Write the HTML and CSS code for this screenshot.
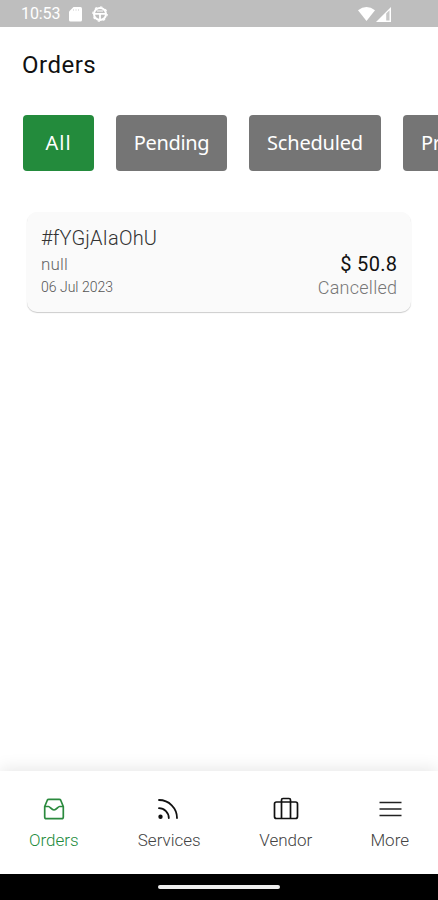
FILE: index.html
```html
<!DOCTYPE html>
<html lang="en">
<head>
<meta charset="utf-8">
<title>Orders</title>
<link rel="stylesheet" href="styles.css">
</head>
<body>
<div class="screen">
  <header class="status">
    <span class="clock">10:53</span>
    <svg class="sd" width="13" height="15" viewBox="0 0 13 15"><path d="M4.500 0H11.500Q13 0 13 1.500V13Q13 14.500 11.500 14.500H1.500Q0 14.500 0 13V4.500Z" fill="#fff"/><path d="M4.500 2v2M7 2v2M9.500 2v2" stroke="#e4e4e4"/></svg>
    <svg class="wheel" width="16" height="16" viewBox="0 0 16 16" fill="none" stroke="#fff"><circle cx="8" cy="8" r="6" stroke-width="2"/><circle cx="8" cy="8" r="7.200" stroke-width="1.200" stroke-dasharray="2.200 3.450"/><path d="M2.500 7.800h11M8 8v5.500" stroke-width="1.800"/><path d="M5 5h6" stroke-width="1"/></svg>
    <svg class="wifi" width="17" height="14" viewBox="0 0 17 14"><path d="M0 3.300Q8.500-3.300 17 3.300L8.500 14Z" fill="#fff"/></svg>
    <svg class="signal" width="15" height="15" viewBox="0 0 15 15"><path d="M0 15L15 0V15Z" fill="#fff"/><path d="M10.200 6.500L13.500 3.200V13.500H10.200Z" fill="#c8c8c8"/></svg>
  </header>
  <h1 class="title">Orders</h1>
  <nav class="filters">
    <button class="pill active">All</button>
    <button class="pill pending">Pending</button>
    <button class="pill scheduled">Scheduled</button>
    <button class="pill preparing">Preparing</button>
  </nav>
  <main class="list">
    <article class="card">
      <div class="info">
        <div class="code">#fYGjAIaOhU</div>
        <div class="desc">null</div>
        <div class="date">06 Jul 2023</div>
      </div>
      <div class="result">
        <div class="price">$ 50.8</div>
        <div class="state">Cancelled</div>
      </div>
    </article>
  </main>
  <footer class="tabs">
    <a class="tab orders"><svg width="26" height="24" viewBox="0 0 26 24" fill="none" stroke="#2b8a3e" stroke-width="1.700" stroke-linejoin="round"><path d="M3.700 9.500L6.300 3.200Q6.700 2.300 7.800 2.300H18.200Q19.300 2.300 19.700 3.200L22.300 9.500V20Q22.300 21.700 20.600 21.700H5.400Q3.700 21.700 3.700 20ZM3.700 9.500H7.500C9 9.500 10.500 13 13 13S17 9.500 18.500 9.500H22.300"/></svg><span>Orders</span></a>
    <a class="tab services"><svg width="26" height="24" viewBox="0 0 26 24" fill="none" stroke="#111" stroke-width="1.800" stroke-linecap="round"><circle cx="4.500" cy="19.700" r="1.300" fill="#111"/><path d="M3 11.200A9.800 9.800 0 0 1 12.800 21M3 3A18 18 0 0 1 21 21"/></svg><span>Services</span></a>
    <a class="tab vendor"><svg width="26" height="24" viewBox="0 0 26 24" fill="none" stroke="#111" stroke-width="1.700" stroke-linejoin="round"><rect x="1.500" y="5" width="23" height="16.500" rx="2"/><path d="M8.500 21V3Q8.500 1.500 10 1.500H16Q17.500 1.500 17.500 3V21"/></svg><span>Vendor</span></a>
    <a class="tab more"><svg width="26" height="24" viewBox="0 0 26 24" fill="none" stroke="#222" stroke-width="1.700"><path d="M2.500 5.500H24.500M2.500 12H24.500M2.500 18.500H24.500"/></svg><span>More</span></a>
  </footer>
  <div class="system"><i class="handle"></i></div>
</div>
</body>
</html>
```
FILE: styles.css
```css
* { box-sizing: border-box; }
body { margin: 0; background: #fff; font-family: Roboto, sans-serif; }
.screen { width: 438px; height: 900px; display: flex; flex-direction: column; overflow: hidden; }
.status { height: 27px; flex: none; background: #bebebe; display: flex; align-items: center; padding: 1px 47px 0 21px; }
.clock { color: #fff; font-size: 16px; line-height: 20px; width: 48px; letter-spacing: -.1px; }
.wheel { margin-left: 10px; }
.wifi { margin-left: auto; }
.signal { margin-left: 1px; }
.title { margin: 0; padding: 24px 22px 0; height: 88px; flex: none; font-size: 24px; line-height: 28px; font-weight: 400; letter-spacing: .5px; color: #111; }
.filters { display: flex; gap: 22px; padding-left: 23px; height: 56px; flex: none; }
.pill { flex: none; height: 56px; border: 0; border-radius: 4px; background: #757575; color: #fff; font: 400 20px/56px "Noto Sans", sans-serif; letter-spacing: -.35px; padding: 0; text-align: center; }
.active { width: 71px; background: #238b3c; letter-spacing: 1px; }
.pending { width: 111px; }
.scheduled { width: 132px; letter-spacing: -.2px; }
.preparing { width: 132px; padding-left: 18px; text-align: left; }
.list { flex: 1; padding: 41px 27px 0; }
.card { height: 100px; border-radius: 10px; background: #fafafa; box-shadow: 0 1px 1px #ccc; display: flex; justify-content: space-between; padding: 12px 14px 0; font-weight: 300; }
.code { font-size: 20px; line-height: 28px; color: #333; letter-spacing: .15px; }
.desc { font-size: 17px; line-height: 24px; color: #666; letter-spacing: .2px; }
.date { font-size: 14px; line-height: 23px; color: #555; }
.result { text-align: right; padding-top: 28px; }
.price { font-size: 20px; line-height: 24px; font-weight: 400; color: #111; letter-spacing: .3px; margin-right: -.3px; }
.state { font-size: 18px; line-height: 24px; color: #777; letter-spacing: .25px; margin-right: -.25px; }
.tabs { height: 103px; flex: none; display: flex; justify-content: space-between; padding: 26px 29px 0; background: #fff; box-shadow: 0 -2px 16px rgba(0,0,0,.1); font-weight: 300; font-size: 17px; }
.tab { display: flex; flex-direction: column; align-items: center; color: #444; line-height: 20px; gap: 9px; }
.tab.services, .tab.vendor { position: relative; left: .5px; }
.tab.orders { color: #238b3c; }
.system { height: 26px; flex: none; background: #000; display: flex; justify-content: center; padding-top: 11px; }
.handle { width: 122px; height: 4px; border-radius: 2px; background: #eee; }
```
